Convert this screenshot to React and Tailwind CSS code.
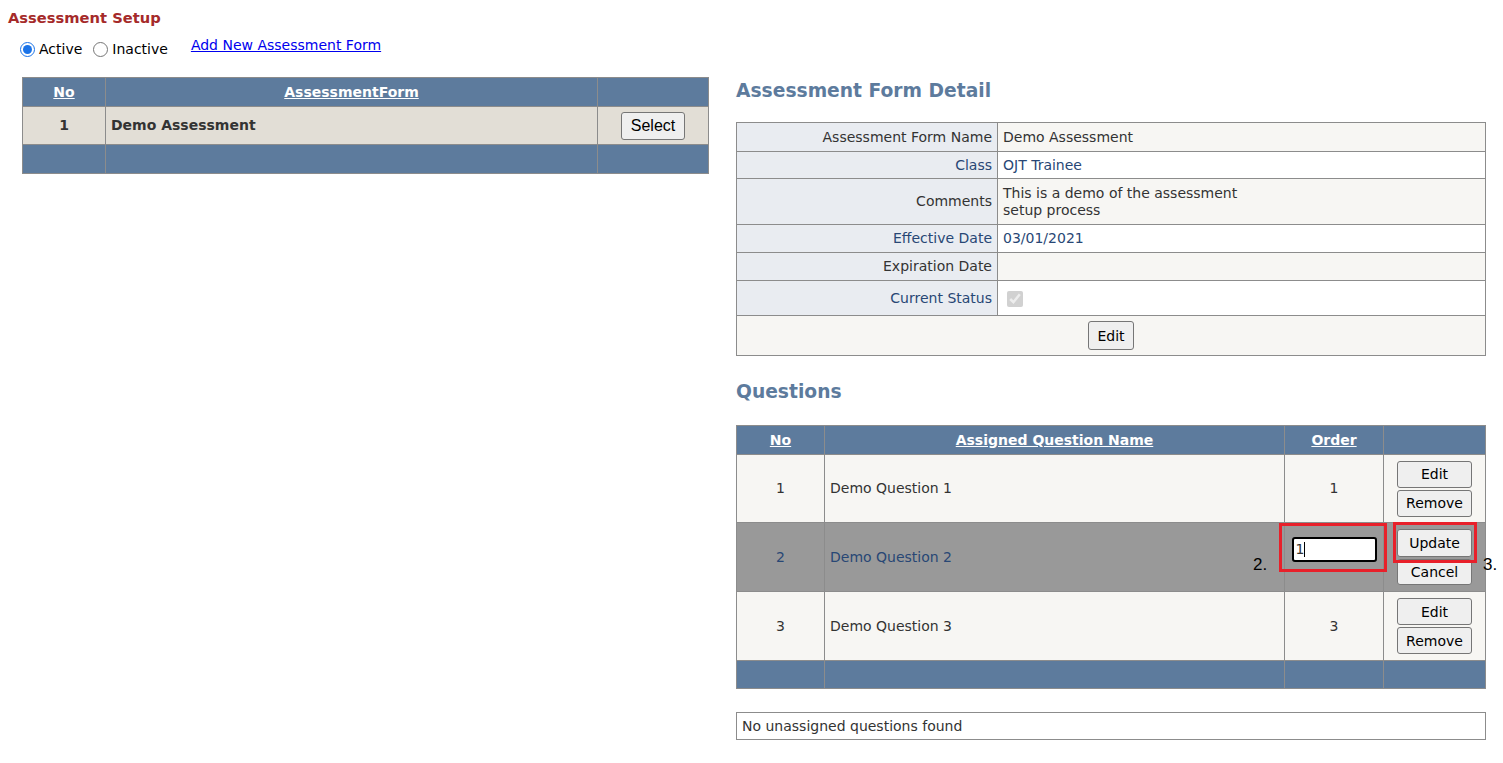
import React from "react";

const HEAD = "bg-[#5d7b9d] text-white font-bold";
const CELL = "border border-[#8c8c8c]";

const Btn = ({ children, className = "" }) => (
  <button
    className={`bg-[#efefef] border border-[#767676] rounded-[3px] text-[#000] leading-none ${className}`}
  >
    {children}
  </button>
);

const DetailRow = ({ label, children, alt, h }) => (
  <tr className={alt ? "bg-white text-[#284775]" : "bg-[#f7f6f3] text-[#333333]"} style={{ height: h }}>
    <td className={`${CELL} bg-[#e9ecf1] text-right px-[5px] w-[261px]`}>{label}</td>
    <td className={`${CELL} px-[5px]`}>{children}</td>
  </tr>
);

const QuestionRow = ({ no, name, order, h = 69 }) => (
  <tr className="bg-[#f7f6f3] text-[#333333]" style={{ height: h }}>
    <td className={`${CELL} text-center`}>{no}</td>
    <td className={`${CELL} px-[5px]`}>{name}</td>
    <td className={`${CELL} text-center`}>{order}</td>
    <td className={`${CELL}`}>
      <div className="flex flex-col items-center gap-[2px]">
        <Btn className="w-[75px] h-[27px]">Edit</Btn>
        <Btn className="w-[75px] h-[27px]">Remove</Btn>
      </div>
    </td>
  </tr>
);

export default function App() {
  return (
    <div className="min-h-[763px] bg-white font-['DejaVu_Sans',Verdana,sans-serif] text-[14px] text-[#333333] pb-6">
      <h1 className="text-[#a52a2a] font-bold text-[14.7px] pl-[8px] pt-[9px] leading-[18px]">
        Assessment Setup
      </h1>

      <div className="flex items-center pl-[20px] mt-[13px] h-[18px] text-[#000]">
        <label className="flex items-center">
          <input type="radio" name="status" defaultChecked className="w-[15px] h-[15px] m-0 accent-[#1a73e8]" />
          <span className="ml-[4px]">Active</span>
        </label>
        <label className="flex items-center ml-[11px]">
          <input type="radio" name="status" className="w-[15px] h-[15px] m-0" />
          <span className="ml-[4px]">Inactive</span>
        </label>
        <a href="#" className="ml-[23px] -mt-[8px] text-[#0000ee] underline">
          Add New Assessment Form
        </a>
      </div>

      <div className="flex items-start mt-[20px]">
        {/* left grid */}
        <div className="ml-[22px] w-[687px] -mt-[1px]">
          <table className="w-full border-collapse">
            <thead>
              <tr className={`${HEAD} h-[29px]`}>
                <th className={`${CELL} w-[83px] underline`}>No</th>
                <th className={`${CELL} underline`}>AssessmentForm</th>
                <th className={`${CELL} w-[111px]`}></th>
              </tr>
            </thead>
            <tbody>
              <tr className="bg-[#e2ded6] font-bold text-[#333333] h-[38px]">
                <td className={`${CELL} text-center`}>1</td>
                <td className={`${CELL} px-[5px]`}>Demo Assessment</td>
                <td className={`${CELL} text-center`}>
                  <Btn className="font-['Liberation_Sans',Arial,sans-serif] font-normal text-[16px] px-[9px] h-[28px]">
                    Select
                  </Btn>
                </td>
              </tr>
              <tr className={`${HEAD} h-[29px]`}>
                <td className={CELL}></td>
                <td className={CELL}></td>
                <td className={CELL}></td>
              </tr>
            </tbody>
          </table>
        </div>

        {/* right detail */}
        <div className="ml-[27px] w-[750px]">
          <h2 className="text-[#5d7b9d] font-bold text-[18.7px] leading-[24px] mt-[1px]">
            Assessment Form Detail
          </h2>
          <table className="w-full border-collapse mt-[19px]">
            <tbody>
              <DetailRow label="Assessment Form Name" h={29}>Demo Assessment</DetailRow>
              <DetailRow label="Class" alt h={27}>OJT Trainee</DetailRow>
              <DetailRow label="Comments" h={46}>
                <div className="leading-[17px]">
                  This is a demo of the assessment
                  <br />
                  setup process
                </div>
              </DetailRow>
              <DetailRow label="Effective Date" alt h={28}>03/01/2021</DetailRow>
              <DetailRow label="Expiration Date" h={28}></DetailRow>
              <DetailRow label="Current Status" alt h={35}>
                <input type="checkbox" checked disabled readOnly className="w-[16px] h-[16px] m-0 ml-[4px] align-middle" />
              </DetailRow>
              <tr className="bg-[#f7f6f3] h-[40px]">
                <td colSpan={2} className={`${CELL} text-center`}>
                  <Btn className="px-[8px] h-[29px]">Edit</Btn>
                </td>
              </tr>
            </tbody>
          </table>

          <h2 className="text-[#5d7b9d] font-bold text-[18.7px] leading-[24px] mt-[24px]">Questions</h2>

          <div className="relative mt-[21px]">
            <table className="w-full border-collapse">
              <thead>
                <tr className={`${HEAD} h-[29px]`}>
                  <th className={`${CELL} w-[88px] underline`}>No</th>
                  <th className={`${CELL} underline`}>Assigned Question Name</th>
                  <th className={`${CELL} w-[99px] underline`}>Order</th>
                  <th className={`${CELL} w-[102px]`}></th>
                </tr>
              </thead>
              <tbody>
                <QuestionRow no="1" name="Demo Question 1" order="1" h={68} />
                <tr className="bg-[#999999] text-[#284775] h-[69px]">
                  <td className={`${CELL} text-center`}>2</td>
                  <td className={`${CELL} px-[5px]`}>Demo Question 2</td>
                  <td className={`${CELL}`}>
                    <div className="flex flex-col items-center">
                      <div className="w-[85px] h-[25px] bg-white border-2 border-black rounded-[3px] flex items-center px-[2px] text-[#333333]">
                        1<span className="inline-block w-[1px] h-[15px] bg-black"></span>
                      </div>
                      <div className="h-[15px]"></div>
                    </div>
                  </td>
                  <td className={`${CELL}`}>
                    <div className="flex flex-col items-center gap-[2px]">
                      <Btn className="w-[75px] h-[28px]">Update</Btn>
                      <Btn className="w-[75px] h-[26px]">Cancel</Btn>
                    </div>
                  </td>
                </tr>
                <QuestionRow no="3" name="Demo Question 3" order="3" h={69} />
                <tr className={`${HEAD} h-[28px]`}>
                  <td className={CELL}></td>
                  <td className={CELL}></td>
                  <td className={CELL}></td>
                  <td className={CELL}></td>
                </tr>
              </tbody>
            </table>

            {/* annotation marks */}
            <div className="absolute left-[543px] top-[98px] w-[108px] h-[49px] border-[3px] border-[#e8202a]"></div>
            <div className="absolute left-[657px] top-[97px] w-[84px] h-[41px] border-[3px] border-[#e8202a]"></div>
            <div className="absolute left-[517px] top-[127px] text-[17px] text-black font-['Liberation_Sans',Arial,sans-serif]">2.</div>
            <div className="absolute left-[747px] top-[127px] text-[17px] text-black font-['Liberation_Sans',Arial,sans-serif]">3.</div>
          </div>

          <div className="mt-[23px] h-[28px] border border-[#8c8c8c] flex items-center px-[5px] text-[#333333]">
            No unassigned questions found
          </div>
        </div>
      </div>
    </div>
  );
}
